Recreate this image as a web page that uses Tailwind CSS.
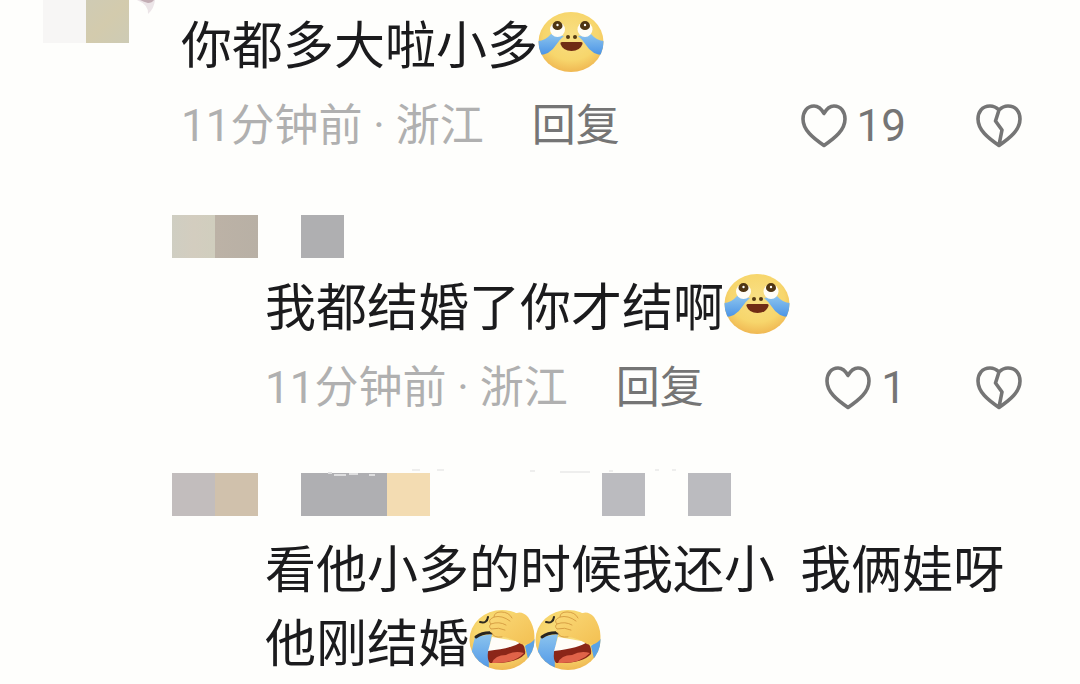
<!doctype html>
<html lang="zh-CN">
  <head>
    <meta charset="UTF-8" />
    <meta name="viewport" content="width=device-width, initial-scale=1.0" />
    <title>评论</title>
    <script src="https://cdn.jsdelivr.net/npm/@tailwindcss/browser@4"></script>
  </head>
  <body class="bg-[#fefefc] font-[Roboto,'Noto_Sans_CJK_SC',sans-serif] text-[#1b1b1d] overflow-x-hidden">

    <!-- shared icons -->
    <svg class="absolute size-0" aria-hidden="true">
      <defs>
        <radialGradient id="face" cx="50%" cy="40%" r="62%">
          <stop offset="0" stop-color="#f8df84" />
          <stop offset=".65" stop-color="#f7d66c" />
          <stop offset="1" stop-color="#efb550" />
        </radialGradient>
        <linearGradient id="tear" x1="0" y1="0" x2="0" y2="1">
          <stop offset="0" stop-color="#8cc4ee" />
          <stop offset="1" stop-color="#4b94e6" />
        </linearGradient>
        <linearGradient id="hand" x1="0" y1="0" x2="1" y2="1">
          <stop offset="0" stop-color="#fad978" />
          <stop offset="1" stop-color="#f3c052" />
        </linearGradient>
        <clipPath id="round"><ellipse cx="34" cy="30" rx="32.500" ry="30" /></clipPath>
      </defs>
      <symbol id="cry" viewBox="1 0 66 60">
        <g clip-path="url(#round)">
          <rect width="68" height="60" fill="url(#face)" />
          <path d="M14 22 Q8 29 1 29 V43 Q13 43 19 33 Q22 28 27 24Z" fill="url(#tear)" />
          <path d="M54 22 Q60 29 67 29 V43 Q55 43 49 33 Q46 28 41 24Z" fill="url(#tear)" />
        </g>
        <circle cx="20.500" cy="17.500" r="7.500" fill="#fffdf6" />
        <circle cx="48" cy="17.500" r="7.500" fill="#fffdf6" />
        <path d="M15.500 14 a5 5 0 1 1 10 0 a5 4 0 0 1 -10 0Z M43 14 a5 5 0 1 1 10 0 a5 4 0 0 1 -10 0Z" fill="#4f3513" />
        <circle cx="20.500" cy="13" r="1.200" fill="#fff" />
        <circle cx="48" cy="13" r="1.200" fill="#fff" />
        <circle cx="31" cy="25" r="2" fill="#563a12" />
        <circle cx="38" cy="25" r="2" fill="#563a12" />
        <path d="M25 30 H44 Q46 30 45.500 32 Q43 39 34.500 39 Q26 39 23.500 32 Q23 30 25 30Z" fill="#702b14" />
      </symbol>
      <symbol id="facepalm" viewBox="1 0 66 60">
        <g clip-path="url(#round)">
          <rect width="68" height="60" fill="url(#face)" />
          <path d="M7 27 L24 24 Q20 42 21 62 H4 Q1 48 7 27Z" fill="url(#tear)" />
          <path d="M57 36 L68 28 V44 L60 49Z" fill="#5ba3e6" />
          <path d="M24 30 L54 33 Q58 38 57 44 Q48 54 22 53 Q19 50 20 42Z" fill="#8b2618" />
          <path d="M24 27 L53 32 Q46 38 20 41Z" fill="#fffdf8" />
          <path d="M24 53 Q27 45 38 45 Q47 40 56 43 Q46 54 24 53Z" fill="#e06349" />
          <path d="M12 12 Q19 14 20 7" fill="none" stroke="#2f2a20" stroke-width="2" stroke-linecap="round" />
          <path d="M8 27 Q15 22 25 23" fill="none" stroke="#29251f" stroke-width="3" stroke-linecap="round" />
        </g>
        <path d="M23 14 Q19 10 26 7 Q25 2 33 2 Q39 0 44 5 Q53 -1 60 7 Q68 19 66 30 Q60 36 53 34 Q44 28 34 27 Q25 28 24 23 Q20 21 23 19 Q20 16 23 14Z" fill="url(#hand)" />
        <path d="M42 11 Q34 5 26 7 Q19 10 23 14 Q31 11 38 15 M23 14 Q20 16 23 19 Q31 17 37 20 M26 7 Q26 2 33 2 Q41 2 44 8 M24 23 Q25 28 34 27" fill="none" stroke="#d49a40" stroke-width=".9" stroke-linecap="round" />
      </symbol>
      <symbol id="heart" viewBox="0 0 46 44">
        <path d="M23 9.500 C20 4 17 2 13 2 C6 2 2 8 2 15 C2 26 12 34 23 41.500 C34 34 44 26 44 15 C44 8 40 2 33 2 C29 2 26 4 23 9.500Z" fill="none" stroke="#757575" stroke-width="3.600" stroke-linejoin="round" />
      </symbol>
      <symbol id="broken" viewBox="0 0 46 44">
        <path d="M23 6 C20 3 17 2 14 2 C6 2 2 8 2 15 C2 26 12 34 23 41.500 C34 34 44 26 44 15 C44 8 40 2 32 2 C29 2 26 3 23 6 L19.500 17 L26 26 L23 41" fill="none" stroke="#757575" stroke-width="3.600" stroke-linejoin="round" />
      </symbol>
    </svg>

    <main>
      <!-- comment -->
      <article class="flex">
        <div class="flex w-[181px] shrink-0 items-start pl-[43px]" aria-hidden="true">
          <span class="size-[43px] bg-[#f7f6f5]"></span>
          <span class="size-[43px] bg-linear-to-br from-[#cfcbb4] via-[#d3cbad] to-[#cdcbb5]"></span>
          <svg class="ml-2 h-4 w-5" viewBox="0 0 20 16"><path d="M0 0 H18 Q17 9 11 14 Q12 5 0 0Z" fill="#ece5e8" /><path d="M3 0 H17 Q15 3 11 3 Q7 2 3 0Z" fill="#c3adb4" /></svg>
        </div>
        <div class="flex-1 pt-2.5">
          <p class="text-[51px] leading-[74px]">你都多大啦小多<svg class="-mb-2 inline-block h-[60px] w-[66px] align-baseline" role="img" aria-label="哭"><use href="#cry" /></svg></p>
          <div class="mt-2.5 flex h-16 items-center pr-[58px] text-[44px] leading-[64px] text-[#757575]">
            <span class="text-[#b0b0b0]">11分钟前 · 浙江</span>
            <button type="button" class="ml-12">回复</button>
            <button type="button" class="ml-auto flex items-center gap-2.5" aria-label="赞 19"><svg class="h-[44px] w-[46px]"><use href="#heart" /></svg>19</button>
            <button type="button" class="ml-[70px]" aria-label="踩"><svg class="h-[44px] w-[46px]"><use href="#broken" /></svg></button>
          </div>
        </div>
      </article>

      <!-- reply -->
      <article class="mt-[57px] pl-[172px]">
        <div class="flex" aria-hidden="true">
          <span class="size-[43px] bg-linear-to-r from-[#cfcec2] via-[#d3cdbf] to-[#d0cebe]"></span>
          <span class="size-[43px] bg-linear-to-r from-[#bcb2a6] to-[#b8b0a5]"></span>
          <span class="ml-[43px] size-[43px] bg-[#afafb1]"></span>
        </div>
        <div class="mt-3.5 pl-[93px]">
          <p class="text-[51px] leading-[74px]">我都结婚了你才结啊<svg class="-mb-2 inline-block h-[60px] w-[66px] align-baseline" role="img" aria-label="哭"><use href="#cry" /></svg></p>
          <div class="mt-2.5 flex h-16 items-center pr-[58px] text-[44px] leading-[64px] text-[#757575]">
            <span class="text-[#b0b0b0]">11分钟前 · 浙江</span>
            <button type="button" class="ml-12">回复</button>
            <button type="button" class="ml-auto flex items-center gap-2.5" aria-label="赞 1"><svg class="h-[44px] w-[46px]"><use href="#heart" /></svg>1</button>
            <button type="button" class="ml-[70px]" aria-label="踩"><svg class="h-[44px] w-[46px]"><use href="#broken" /></svg></button>
          </div>
        </div>
      </article>

      <!-- reply -->
      <article class="mt-[53px] pl-[172px]">
        <div class="relative flex" aria-hidden="true">
          <span class="size-[43px] bg-[#c2bdbd]"></span>
          <span class="size-[43px] bg-[#d0c1ac]"></span>
          <span class="ml-[43px] h-[43px] w-[86px] bg-[#afafb2]"></span>
          <span class="size-[43px] bg-[#f3dcb2]"></span>
          <span class="ml-[172px] size-[43px] bg-[#bbbbbf]"></span>
          <span class="ml-[43px] size-[43px] bg-[#bbbbbf]"></span>
          <!-- edge of the blurred name -->
          <svg class="absolute -top-1 left-[156px] h-2 w-[360px]" viewBox="0 0 360 8" fill="none" stroke-width="2">
            <path d="M0 4 h4 M6 6 h12 M21 5 h9 M41 6 h6" stroke="#dededf" />
            <path d="M84 1 h8 M109 1 h7 M202 2 h5 M232 3 h30 M281 2 h4 M327 1 h4 M344 1 h4" stroke="#eeeeed" />
          </svg>
        </div>
        <div class="mt-[18px] h-[150px] overflow-hidden pl-[93px]">
          <p class="text-[51px] leading-[74px]">看他小多的时候我还小&nbsp; 我俩娃呀<br />他刚结婚<svg class="-mb-2 inline-block h-[60px] w-[66px] align-baseline" role="img" aria-label="笑哭捂脸"><use href="#facepalm" /></svg><svg class="-mb-2 inline-block h-[60px] w-[66px] align-baseline" role="img" aria-label="笑哭捂脸"><use href="#facepalm" /></svg></p>
        </div>
      </article>
    </main>
  </body>
</html>
